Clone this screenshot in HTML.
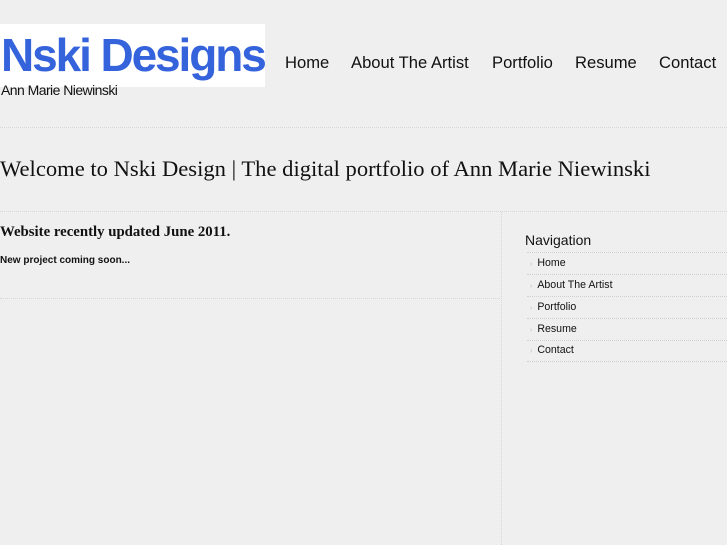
<!DOCTYPE html>
<html><head><style>
body{margin:0;background:#efefef;width:727px;height:545px;overflow:hidden;position:relative;font-family:"Liberation Sans",sans-serif;color:#111}
.a{position:absolute}
.logo{left:0;top:24px;width:265px;height:63px;background:#fff}
.logo span{position:absolute;left:1px;top:5px;font-size:46px;font-weight:bold;color:#3563dc;letter-spacing:-2.1px;line-height:52px;white-space:nowrap}
.sub{left:1px;top:82px;font-size:14px;letter-spacing:-0.55px}
.nav{top:53px;font-size:16.6px;white-space:nowrap}
.h{border-top:1px dotted #d6d6d6;height:0}
.t{left:0;top:156px;font-family:"Liberation Serif",serif;font-size:22.6px;white-space:nowrap}
.li{left:527px;width:200px;border-bottom:1px dotted #d0d0d0;height:21px;font-size:10.6px;line-height:21px}
.li span{color:#bbb;font-size:7px;margin:0 5px 0 3px}
</style></head><body>
<div class="a logo"><span>Nski Designs</span></div>
<div class="a sub">Ann Marie Niewinski</div>
<div class="a nav" style="left:285px">Home</div>
<div class="a nav" style="left:351px">About The Artist</div>
<div class="a nav" style="left:492px">Portfolio</div>
<div class="a nav" style="left:575px">Resume</div>
<div class="a nav" style="left:659px">Contact</div>
<div class="a h" style="left:0;top:127px;width:727px"></div>
<div class="a t">Welcome to Nski Design | The digital portfolio of Ann Marie Niewinski</div>
<div class="a h" style="left:0;top:211px;width:727px"></div>
<div class="a" style="left:0;top:224px;font-family:'Liberation Serif',serif;font-weight:bold;font-size:14.8px">Website recently updated June 2011.</div>
<div class="a" style="left:0;top:255px;font-weight:bold;font-size:10px">New project coming soon...</div>
<div class="a h" style="left:0;top:298px;width:500px"></div>
<div class="a" style="left:501px;top:212px;height:333px;border-left:1px dotted #d6d6d6"></div>
<div class="a" style="left:525px;top:232px;font-size:14px">Navigation</div>
<div class="a h" style="left:527px;top:252px;width:200px;border-color:#d0d0d0"></div>
<div class="a li" style="top:253px"><span>›</span>Home</div>
<div class="a li" style="top:275px"><span>›</span>About The Artist</div>
<div class="a li" style="top:297px"><span>›</span>Portfolio</div>
<div class="a li" style="top:319px"><span>›</span>Resume</div>
<div class="a li" style="top:340px"><span>›</span>Contact</div>
</body></html>
